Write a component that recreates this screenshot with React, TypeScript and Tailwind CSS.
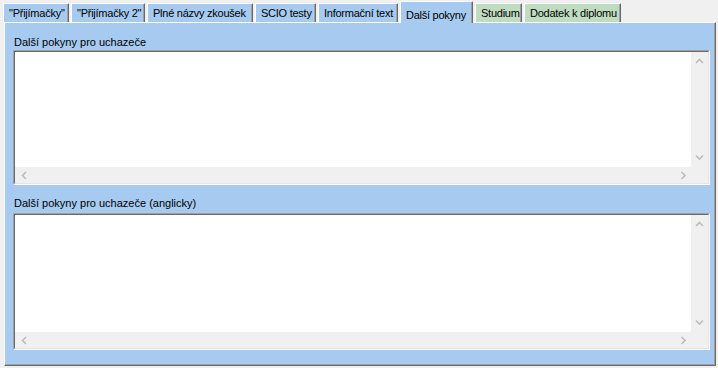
import React from "react";

const Chevron = ({ dir }: { dir: "up" | "down" | "left" | "right" }) => {
  const paths: Record<string, string> = {
    up: "M1 5 L4.5 1.5 L8 5",
    down: "M1 1.5 L4.5 5 L8 1.5",
    left: "M5 1 L1.5 4.5 L5 8",
    right: "M1.5 1 L5 4.5 L1.5 8",
  };
  const horiz = dir === "up" || dir === "down";
  return (
    <svg width={horiz ? 9 : 7} height={horiz ? 7 : 9} viewBox={horiz ? "0 0 9 7" : "0 0 7 9"}>
      <path d={paths[dir]} fill="none" stroke="#bcbcbc" strokeWidth="1.6" />
    </svg>
  );
};

const TextBox = ({ h }: { h: string }) => (
  <div className={`border-l border-t border-l-[#a0a0a0] border-t-[#a0a0a0] border-r border-b border-r-white border-b-white ${h}`}>
    <div className="h-full border-l border-t border-l-[#696969] border-t-[#696969] border-r border-b border-r-[#e3e3e3] border-b-[#e3e3e3] bg-[#f0f0f0] flex flex-col">
      <div className="flex-1 flex">
        <div className="flex-1 bg-white rounded-br-[2px]" />
        <div className="w-[17px] flex flex-col items-center justify-between pt-[6px] pb-[6px]">
          <Chevron dir="up" />
          <Chevron dir="down" />
        </div>
      </div>
      <div className="h-[16px] flex items-center justify-between pl-[6px] pr-[21px]">
        <Chevron dir="left" />
        <Chevron dir="right" />
      </div>
    </div>
  </div>
);

const Tab = ({
  label,
  w,
  green,
  active,
}: {
  label: string;
  w: string;
  green?: boolean;
  active?: boolean;
}) => (
  <div
    className={`${w} shrink-0 overflow-hidden ${active ? "h-[22px] relative top-[1px] z-10 pt-[6px]" : "h-[19px] pt-[2px]"} ${
      green ? "bg-[#c0dcc0]" : "bg-[#a6caf0]"
    } border-l border-t border-l-white border-t-white border-r border-r-[#696969] shadow-[inset_-1px_0_0_#a0a0a0] rounded-t-[1px] pl-[5px] whitespace-nowrap leading-[14px] tracking-[-0.25px] text-black`}
  >
    {label}
  </div>
);

export default function App() {
  return (
    <div
      className="w-[718px] h-[368px] bg-[#f0f0f0] flex flex-col text-[11px] text-black"
      style={{ fontFamily: '"Liberation Sans", Arial, sans-serif' }}
    >
      <div className="h-[22px] flex items-end pl-[3px] gap-[2px] shrink-0">
        <Tab label={'"Přijímačky"'} w="w-[66px]" />
        <Tab label={'"Přijímačky 2"'} w="w-[74px]" />
        <Tab label="Plné názvy zkoušek" w="w-[106px]" />
        <Tab label="SCIO testy" w="w-[61px]" />
        <Tab label="Informační text" w="w-[80px]" />
        <Tab label="Další pokyny" w="w-[73px]" active />
        <Tab label="Studium" w="w-[47px]" green />
        <Tab label="Dodatek k diplomu" w="w-[97px]" green />
      </div>
      <div className="flex-1 ml-[4px] mr-[2px] mb-[2px] border-l border-t border-l-white border-t-white border-r border-b border-r-[#696969] border-b-[#696969]">
        <div className="h-full border-r border-b border-r-[#a0a0a0] border-b-[#a0a0a0] bg-[#a6caf0] pl-[8px] pr-[4px] pt-[12px] flex flex-col">
          <div className="h-[14px] leading-[14px] pl-[1px]">Další pokyny pro uchazeče</div>
          <div className="mt-[1px]">
            <TextBox h="h-[135px]" />
          </div>
          <div className="h-[14px] leading-[14px] pl-[1px] mt-[11px]">Další pokyny pro uchazeče (anglicky)</div>
          <div className="mt-[3px]">
            <TextBox h="h-[137px]" />
          </div>
        </div>
      </div>
    </div>
  );
}
